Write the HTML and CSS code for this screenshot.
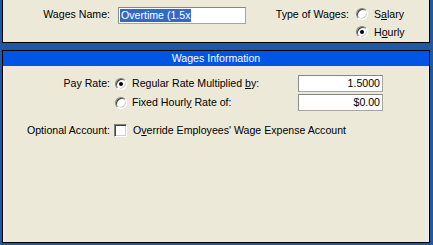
FILE: index.html
```html
<!DOCTYPE html>
<html lang="en">
<head>
    <meta charset="UTF-8">
    <meta name="viewport" content="width=device-width, initial-scale=1.0">
    <title>Wages</title>
    <link rel="stylesheet" href="styles.css">
</head>
<body>
    <div class="window">
        <div class="top-panel">
            <div class="field-label">Wages Name:</div>
            <div class="textbox name-box"><span class="selected">Overtime (1.5x</span></div>
            <div class="type-label">Type of Wages:</div>
            <div class="option"><span class="radio"></span><span class="option-text">S<u>a</u>lary</span></div>
            <div class="option row-two"><span class="radio checked"></span><span class="option-text">H<u>o</u>urly</span></div>
        </div>

        <div class="info-panel">
            <div class="info-header">Wages Information</div>

            <div class="info-grid">
                <div class="field-label">Pay Rate:</div>
                <div class="cell"><span class="radio checked"></span></div>
                <div class="text-cell">Regular Rate Multiplied <u>b</u>y:</div>
                <div class="textbox value-box">1.5000</div>

                <div class="field-label"></div>
                <div class="cell"><span class="radio"></span></div>
                <div class="text-cell">Fixed Hourl<u>y</u> Rate of:</div>
                <div class="textbox value-box">$0.00</div>

                <div class="field-label account-row">Optional Account:</div>
                <div class="cell account-row"><span class="checkbox"></span></div>
                <div class="text-cell account-text account-row">O<u>v</u>erride Employees' Wage Expense Account</div>
            </div>
        </div>
    </div>
</body>
</html>
```

FILE: styles.css
```css
:root {
    --face-color: #ece9d8;
    --frame-color: #1d5aa3;
    --header-color: #0055e5;
    --select-color: #316ac5;
    --shadow-color: #808080;
    --dark-shadow: #404040;
}

* {
    margin: 0;
    padding: 0;
    box-sizing: border-box;
}

body {
    font-family: Tahoma, 'Liberation Sans', Arial, sans-serif;
    font-size: 10.6px;
    color: #000;
    background-color: var(--frame-color);
    height: 245px;
    overflow: hidden;
}

.window {
    padding: 0 3px 0 2px;
}

/* top section */

.top-panel {
    height: 43px;
    background-color: var(--face-color);
    border: 1px solid #000;
    border-top: none;
    margin-bottom: 7px;
    padding-top: 5px;
    display: grid;
    grid-template-columns: 107px 136px 103px 1fr;
    grid-template-rows: 18px 18px;
    align-items: center;
}

.field-label {
    text-align: right;
    white-space: nowrap;
}

.type-label {
    text-align: right;
    white-space: nowrap;
}

.option {
    display: flex;
    align-items: center;
    padding-left: 7px;
}

.option .option-text {
    margin-left: 6px;
}

.row-two {
    grid-column: 4;
    grid-row: 2;
}

.textbox {
    height: 17px;
    line-height: 15px;
    background-color: #fff;
    border: 1px solid #a5a5a5;
    border-top-color: #858585;
    border-left-color: #8e8e8e;
    white-space: nowrap;
    overflow: hidden;
}

.name-box {
    width: 128px;
    margin-left: 8px;
    align-self: start;
    margin-top: 2px;
    padding-left: 1px;
    line-height: 13px;
    padding-top: 1px;
}

.selected {
    display: inline-block;
    background-color: var(--select-color);
    color: #fff;
    padding: 0 1px;
}

/* controls */

.radio {
    position: relative;
    display: inline-block;
    flex: none;
    width: 12px;
    height: 12px;
    border-radius: 50%;
    background-color: #fff;
    border: 1px solid;
    border-color: var(--shadow-color) #fff #fff var(--shadow-color);
    box-shadow: inset 1px 1px 0 var(--dark-shadow), inset -1px -1px 0 #d4d0c8;
}

.radio.checked::after {
    content: "";
    position: absolute;
    left: 3px;
    top: 3px;
    width: 4px;
    height: 4px;
    border-radius: 50%;
    background-color: #000;
}

.checkbox {
    display: inline-block;
    width: 13px;
    height: 13px;
    background-color: #fff;
    border: 1px solid;
    border-color: var(--shadow-color) #fff #fff var(--shadow-color);
    box-shadow: inset 1px 1px 0 var(--dark-shadow), inset -1px -1px 0 #d4d0c8;
}

/* information section */

.info-panel {
    height: 193px;
    background-color: var(--face-color);
    border: 1px solid #000;
    box-shadow: inset 2px 0 0 #f6e9df, inset -1px 0 0 #f3efe6;
}

.info-header {
    height: 15px;
    line-height: 15px;
    background-color: var(--header-color);
    color: #fff;
    text-align: center;
}

.info-grid {
    padding-top: 9px;
    display: grid;
    grid-template-columns: 107px 17px 171px 85px;
    grid-template-rows: 19px 19px 26px;
    align-items: start;
}

.info-grid .field-label,
.info-grid .cell,
.text-cell {
    height: 17px;
    line-height: 17px;
}

.cell {
    display: flex;
    align-items: center;
}

.text-cell {
    padding-left: 5px;
    white-space: nowrap;
}

.cell .radio {
    margin-left: 5px;
}

.value-box {
    text-align: right;
    padding-right: 2px;
}

.account-row {
    margin-top: 9px;
}

.cell .checkbox {
    margin-left: 4px;
}

.account-text {
    grid-column: 3 / 5;
    padding-left: 6px;
}
```
